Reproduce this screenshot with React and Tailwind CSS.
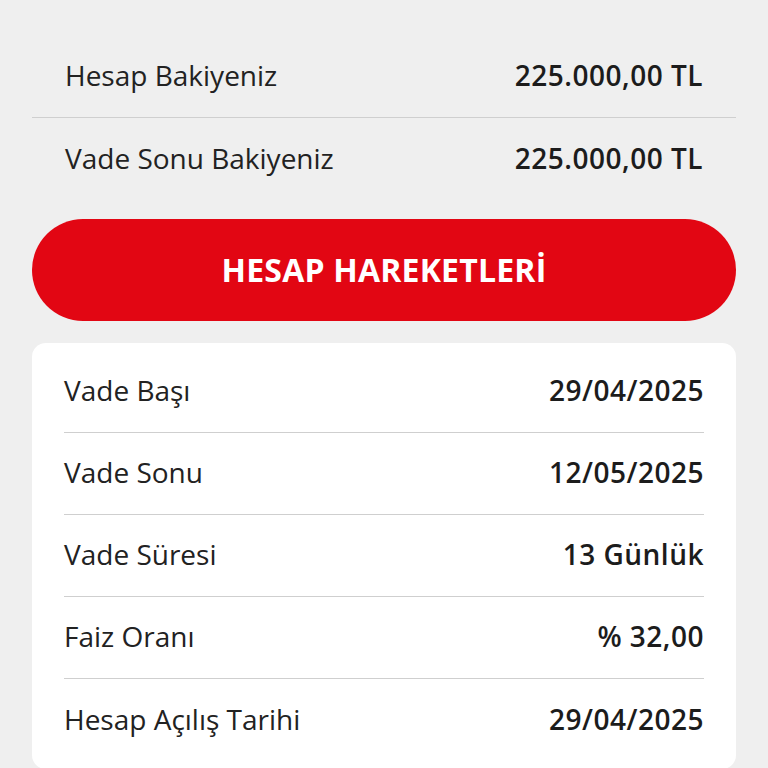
import React from "react";

const top = [
  ["Hesap Bakiyeniz", "225.000,00 TL"],
  ["Vade Sonu Bakiyeniz", "225.000,00 TL"],
];

const details = [
  ["Vade Başı", "29/04/2025"],
  ["Vade Sonu", "12/05/2025"],
  ["Vade Süresi", "13 Günlük"],
  ["Faiz Oranı", "% 32,00"],
  ["Hesap Açılış Tarihi", "29/04/2025"],
];

function Row({ label, value, divider, padded }) {
  return (
    <div
      className={`flex h-[82px] items-center justify-between pb-[3px] ${divider ? "border-b border-[#cfcfcf]" : ""} ${padded ? "px-[33px]" : ""}`}
    >
      <span className="text-[28px] text-[#222222]">{label}</span>
      <span className="text-[28px] font-semibold tracking-[0.5px] text-[#1c1c1c]">{value}</span>
    </div>
  );
}

export default function App() {
  return (
    <div
      className="min-h-[768px] w-[768px] overflow-hidden bg-[#efefef] px-8 pt-[36px]"
      style={{ fontFamily: "'Open Sans', 'Noto Sans', sans-serif" }}
    >
      <div>
        {top.map(([l, v], i) => (
          <Row key={l} label={l} value={v} divider={i === 0} padded />
        ))}
      </div>
      <button className="mt-[19px] flex h-[102px] w-full items-center justify-center rounded-full bg-[#e20613] text-[32px] font-bold tracking-[0.2px] text-white">
        HESAP HAREKETLERİ
      </button>
      <div className="mt-[22px] rounded-[14px] bg-white px-8 pb-2 pt-2">
        {details.map(([l, v], i) => (
          <Row key={l} label={l} value={v} divider={i < details.length - 1} />
        ))}
      </div>
    </div>
  );
}
